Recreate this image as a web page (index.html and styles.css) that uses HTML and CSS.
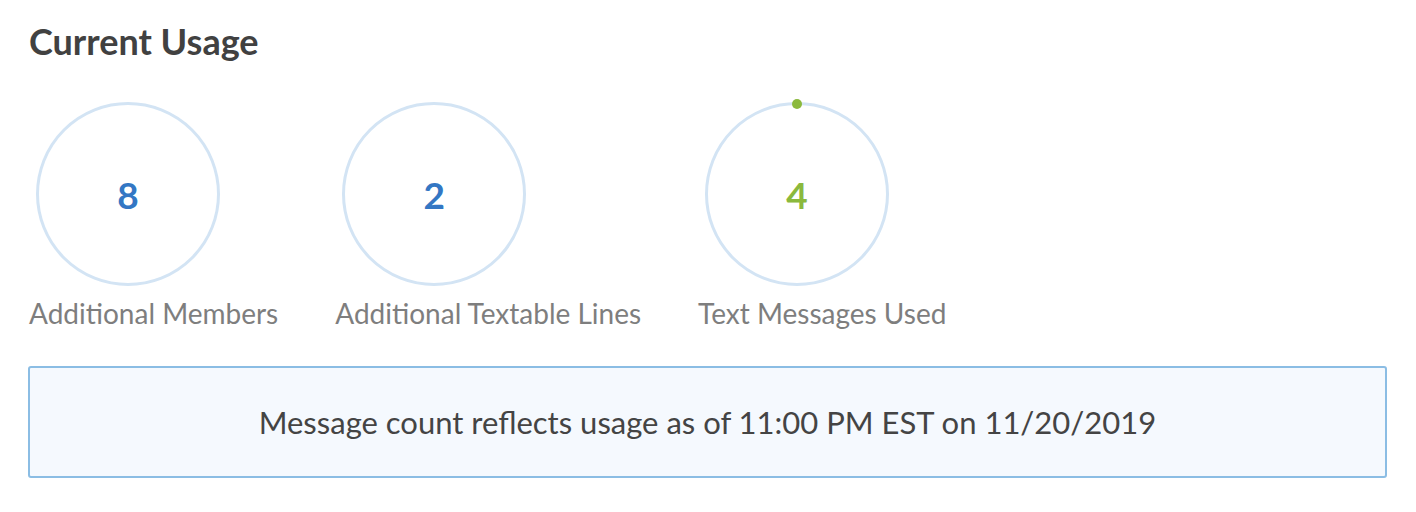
FILE: index.html
```html
<!DOCTYPE html>
<html>
<head>
<meta charset="utf-8">
<link rel="stylesheet" href="styles.css">
</head>
<body>
<div class="page">
  <h1 class="title">Current Usage</h1>
  <div class="stats">
    <div class="stat">
      <div class="ring"><span class="num blue">8</span></div>
      <div class="label">Additional Members</div>
    </div>
    <div class="stat">
      <div class="ring"><span class="num blue">2</span></div>
      <div class="label">Additional Textable Lines</div>
    </div>
    <div class="stat">
      <div class="ring"><span class="dot"></span><span class="num green">4</span></div>
      <div class="label">Text Messages Used</div>
    </div>
  </div>
  <div class="notice">Message count reflects usage as of 11:00 PM EST on 11/20/2019</div>
</div>
</body>
</html>
```
FILE: styles.css
```css
html, body {
  margin: 0;
  padding: 0;
  background: #ffffff;
}
body {
  font-family: Lato, "Open Sans", sans-serif;
}
.page {
  padding: 21px 29px 0 28px;
}
.title {
  margin: 0 0 0 1px;
  font-size: 36px;
  font-weight: 700;
  color: #414141;
  line-height: 40px;
}
.stats {
  display: flex;
  gap: 57px;
  margin-top: 41px;
  margin-left: 1px;
}
.stat {
  display: flex;
  flex-direction: column;
  align-items: flex-start;
}
.ring {
  position: relative;
  box-sizing: border-box;
  width: 184px;
  height: 184px;
  margin-left: 7px;
  border: 3px solid #d3e4f4;
  border-radius: 50%;
  display: flex;
  align-items: center;
  justify-content: center;
}
.num {
  font-size: 37px;
  font-weight: 700;
  line-height: 1;
}
.blue { color: #3377c4; }
.green { color: #8bb93d; }
.dot {
  position: absolute;
  top: -6px;
  left: 50%;
  width: 10px;
  height: 10px;
  margin-left: -5px;
  border-radius: 50%;
  background: #8bb93d;
}
.label {
  margin-top: 10px;
  font-size: 28px;
  line-height: 34px;
  color: #7e7e7e;
}
.notice {
  margin-top: 36px;
  height: 112px;
  box-sizing: border-box;
  border: 2px solid #8bbde4;
  border-radius: 3px;
  background: #f5f9fe;
  display: flex;
  align-items: center;
  justify-content: center;
  font-size: 31px;
  color: #444444;
}
```
